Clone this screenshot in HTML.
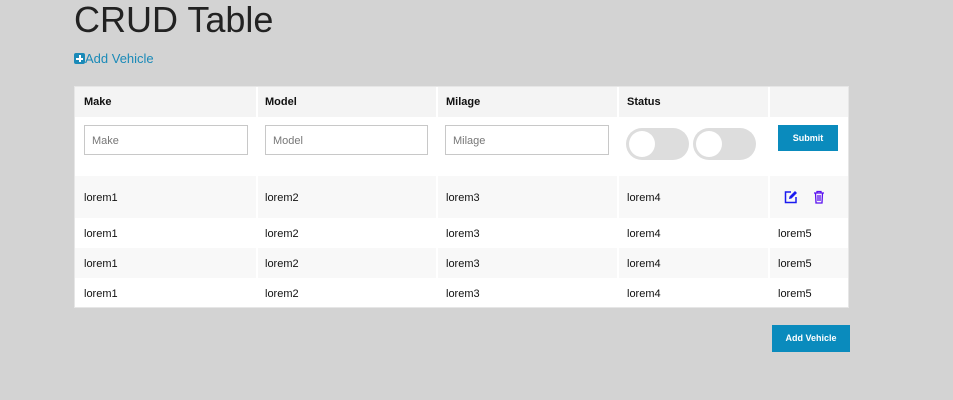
<!DOCTYPE html>
<html><head><style>
body{margin:0;background:#d3d3d3;font-family:"Liberation Sans",sans-serif;width:953px;height:400px;position:relative;overflow:hidden}
.a{position:absolute}
h1{position:absolute;left:74px;top:0;margin:0;font-size:36px;font-weight:normal;color:#222;line-height:40px}
.add{left:74px;top:51px;color:#1a8ab8;font-size:13px}
.pl{display:inline-block;width:11px;height:11px;background:#1a8ab8;border-radius:2px;position:relative;vertical-align:-1px}
.pl:before{content:"";position:absolute;left:2px;top:4.5px;width:7px;height:2px;background:#fff}
.pl:after{content:"";position:absolute;left:4.5px;top:2px;width:2px;height:7px;background:#fff}
.tbl{left:74px;top:86px;width:775px;height:222px;background:#fff;border:1px solid #e6e6e6;box-sizing:border-box}
.row{position:absolute;left:0;width:773px}
.c{position:absolute;font-size:11px;color:#111;margin-top:1px}
.vl{position:absolute;top:0;width:2px;background:#fff}
.inp{position:absolute;top:125px;height:30px;border:1px solid #c8c8c8;box-sizing:border-box;background:#fff;font-size:11px;color:#777;padding:9px 0 0 7px}
.tg{position:absolute;top:128px;width:63px;height:32px;border-radius:16px;background:#ddd}
.tg:after{content:"";position:absolute;left:3px;top:3px;width:26px;height:26px;border-radius:50%;background:#fff}
.btn{position:absolute;background:#0a8bbd;color:#fff;font-size:9px;text-align:center;font-weight:bold}
</style></head><body>
<h1>CRUD Table</h1>
<div class="a add"><span class="pl"></span>Add Vehicle</div>
<div class="a tbl">
<div class="row" style="top:0;height:30px;background:#f4f4f4"></div>
<div class="row" style="top:89px;height:42px;background:#f8f8f8"></div>
<div class="row" style="top:161px;height:30px;background:#f8f8f8"></div>
</div>
<div class="vl" style="left:256px;top:87px;height:30px"></div>
<div class="vl" style="left:436px;top:87px;height:30px"></div>
<div class="vl" style="left:617px;top:87px;height:30px"></div>
<div class="vl" style="left:768px;top:87px;height:30px"></div>
<div class="vl" style="left:256px;top:176px;height:42px"></div>
<div class="vl" style="left:436px;top:176px;height:42px"></div>
<div class="vl" style="left:617px;top:176px;height:42px"></div>
<div class="vl" style="left:768px;top:176px;height:42px"></div>
<div class="vl" style="left:256px;top:248px;height:30px"></div>
<div class="vl" style="left:436px;top:248px;height:30px"></div>
<div class="vl" style="left:617px;top:248px;height:30px"></div>
<div class="vl" style="left:768px;top:248px;height:30px"></div>
<div class="c" style="left:84px;top:95px;font-weight:bold">Make</div>
<div class="c" style="left:265px;top:95px;font-weight:bold">Model</div>
<div class="c" style="left:446px;top:95px;font-weight:bold">Milage</div>
<div class="c" style="left:627px;top:95px;font-weight:bold">Status</div>
<div class="inp" style="left:84px;width:164px">Make</div>
<div class="inp" style="left:265px;width:163px">Model</div>
<div class="inp" style="left:445px;width:164px">Milage</div>
<div class="tg" style="left:626px"></div>
<div class="tg" style="left:693px"></div>
<div class="btn" style="left:778px;top:125px;width:60px;height:26px;line-height:26px">Submit</div>
<div class="c" style="left:84px;top:191px">lorem1</div><div class="c" style="left:265px;top:191px">lorem2</div><div class="c" style="left:446px;top:191px">lorem3</div><div class="c" style="left:627px;top:191px">lorem4</div>
<svg class="a" style="left:784px;top:190px" width="14" height="14" viewBox="0 0 14 14"><path d="M7 2H1.5v10.5H12V7" fill="none" stroke="#1b1bf0" stroke-width="1.5"/><path d="M5 9l.5-2.5L11 1l2 2-5.5 5.5z" fill="#1b1bf0"/></svg>
<svg class="a" style="left:813px;top:190px" width="12" height="14" viewBox="0 0 12 14"><path d="M1 3h10M4 3V1.5h4V3M2.5 3l.5 10h6l.5-10M5 5v6M7 5v6" fill="none" stroke="#5a10f0" stroke-width="1.3"/></svg>
<div class="c" style="left:84px;top:227px">lorem1</div><div class="c" style="left:265px;top:227px">lorem2</div><div class="c" style="left:446px;top:227px">lorem3</div><div class="c" style="left:627px;top:227px">lorem4</div><div class="c" style="left:778px;top:227px">lorem5</div>
<div class="c" style="left:84px;top:257px">lorem1</div><div class="c" style="left:265px;top:257px">lorem2</div><div class="c" style="left:446px;top:257px">lorem3</div><div class="c" style="left:627px;top:257px">lorem4</div><div class="c" style="left:778px;top:257px">lorem5</div>
<div class="c" style="left:84px;top:287px">lorem1</div><div class="c" style="left:265px;top:287px">lorem2</div><div class="c" style="left:446px;top:287px">lorem3</div><div class="c" style="left:627px;top:287px">lorem4</div><div class="c" style="left:778px;top:287px">lorem5</div>
<div class="btn" style="left:772px;top:325px;width:78px;height:27px;line-height:27px">Add Vehicle</div>
</body></html>
